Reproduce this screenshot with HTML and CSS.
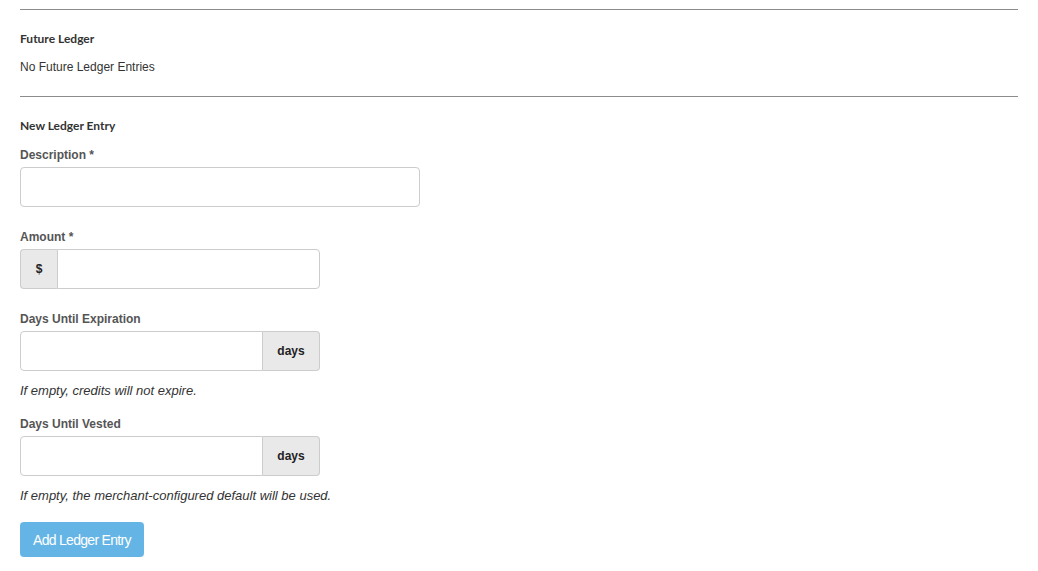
FILE: index.html
```html
<!DOCTYPE html>
<html lang="en">
<head>
    <meta charset="UTF-8">
    <meta name="viewport" content="width=device-width, initial-scale=1.0">
    <title>Ledger</title>
    <link rel="stylesheet" href="styles.css">
</head>
<body>
    <div class="container">
        <hr class="divider">
        <h4 class="section-title">Future Ledger</h4>
        <p class="empty-text">No Future Ledger Entries</p>

        <hr class="divider">
        <h4 class="section-title">New Ledger Entry</h4>

        <form class="ledger-form">
            <div class="form-group">
                <label for="description">Description *</label>
                <input type="text" id="description" class="field field-wide">
            </div>

            <div class="form-group">
                <label for="amount">Amount *</label>
                <div class="input-group">
                    <span class="addon addon-left">$</span>
                    <input type="number" id="amount" class="field">
                </div>
            </div>

            <div class="form-group has-help">
                <label for="expiration">Days Until Expiration</label>
                <div class="input-group">
                    <input type="number" id="expiration" class="field">
                    <span class="addon addon-right">days</span>
                </div>
                <p class="help-text">If empty, credits will not expire.</p>
            </div>

            <div class="form-group has-help last">
                <label for="vested">Days Until Vested</label>
                <div class="input-group">
                    <input type="number" id="vested" class="field">
                    <span class="addon addon-right">days</span>
                </div>
                <p class="help-text">If empty, the merchant-configured default will be used.</p>
            </div>

            <button type="button" class="btn-submit">Add Ledger Entry</button>
        </form>
    </div>
</body>
</html>
```

FILE: styles.css
```css
body {
    margin: 0;
    font-family: "Liberation Sans", Arial, sans-serif;
    font-size: 12px;
    color: #333;
    background: #fff;
}
.container {
    padding: 9px 20px 20px;
}
.divider {
    margin: 0;
    border: none;
    height: 1px;
    background: #8c8c8c;
}
.section-title {
    margin: 21px 0 0;
    font-family: Lato, sans-serif;
    font-size: 12px;
    font-weight: bold;
    line-height: 16px;
    color: #333;
}
.empty-text {
    margin: 12px 0 21px;
    line-height: 16px;
}
.ledger-form {
    margin-top: 13px;
}
.form-group {
    margin-bottom: 22px;
}
.form-group.has-help {
    margin-bottom: 17px;
}
.form-group.last {
    margin-bottom: 18px;
}
label {
    display: block;
    font-weight: bold;
    color: #555;
    line-height: 16px;
    margin-bottom: 4px;
}
.field {
    box-sizing: border-box;
    height: 40px;
    padding: 6px 10px;
    border: 1px solid #ccc;
    border-radius: 4px;
    font-size: 12px;
    background: #fff;
    outline: none;
    -moz-appearance: textfield;
}
.field::-webkit-inner-spin-button,
.field::-webkit-outer-spin-button {
    -webkit-appearance: none;
    margin: 0;
}
.field-wide {
    width: 400px;
    display: block;
}
.input-group {
    display: flex;
    width: 300px;
    height: 40px;
}
.input-group .field {
    flex: 1;
    min-width: 0;
}
.addon {
    box-sizing: border-box;
    display: flex;
    align-items: center;
    justify-content: center;
    background: #e9e9e9;
    border: 1px solid #ccc;
    font-weight: bold;
    color: #222;
}
.addon-left {
    width: 37px;
    border-radius: 4px 0 0 4px;
    border-right: none;
}
.addon-left + .field {
    border-radius: 0 4px 4px 0;
}
.addon-right {
    width: 57px;
    border-radius: 0 4px 4px 0;
    border-left: none;
}
.input-group .field:first-child {
    border-radius: 4px 0 0 4px;
}
.help-text {
    margin: 12px 0 0;
    font-size: 13px;
    font-style: italic;
    line-height: 16px;
    color: #333;
}
.btn-submit {
    display: block;
    padding: 0 13px;
    height: 35px;
    background: #64b5e6;
    color: #fff;
    border: none;
    border-radius: 4px;
    font-family: "Liberation Sans", Arial, sans-serif;
    font-size: 14px;
    letter-spacing: -0.7px;
    cursor: pointer;
}
```
